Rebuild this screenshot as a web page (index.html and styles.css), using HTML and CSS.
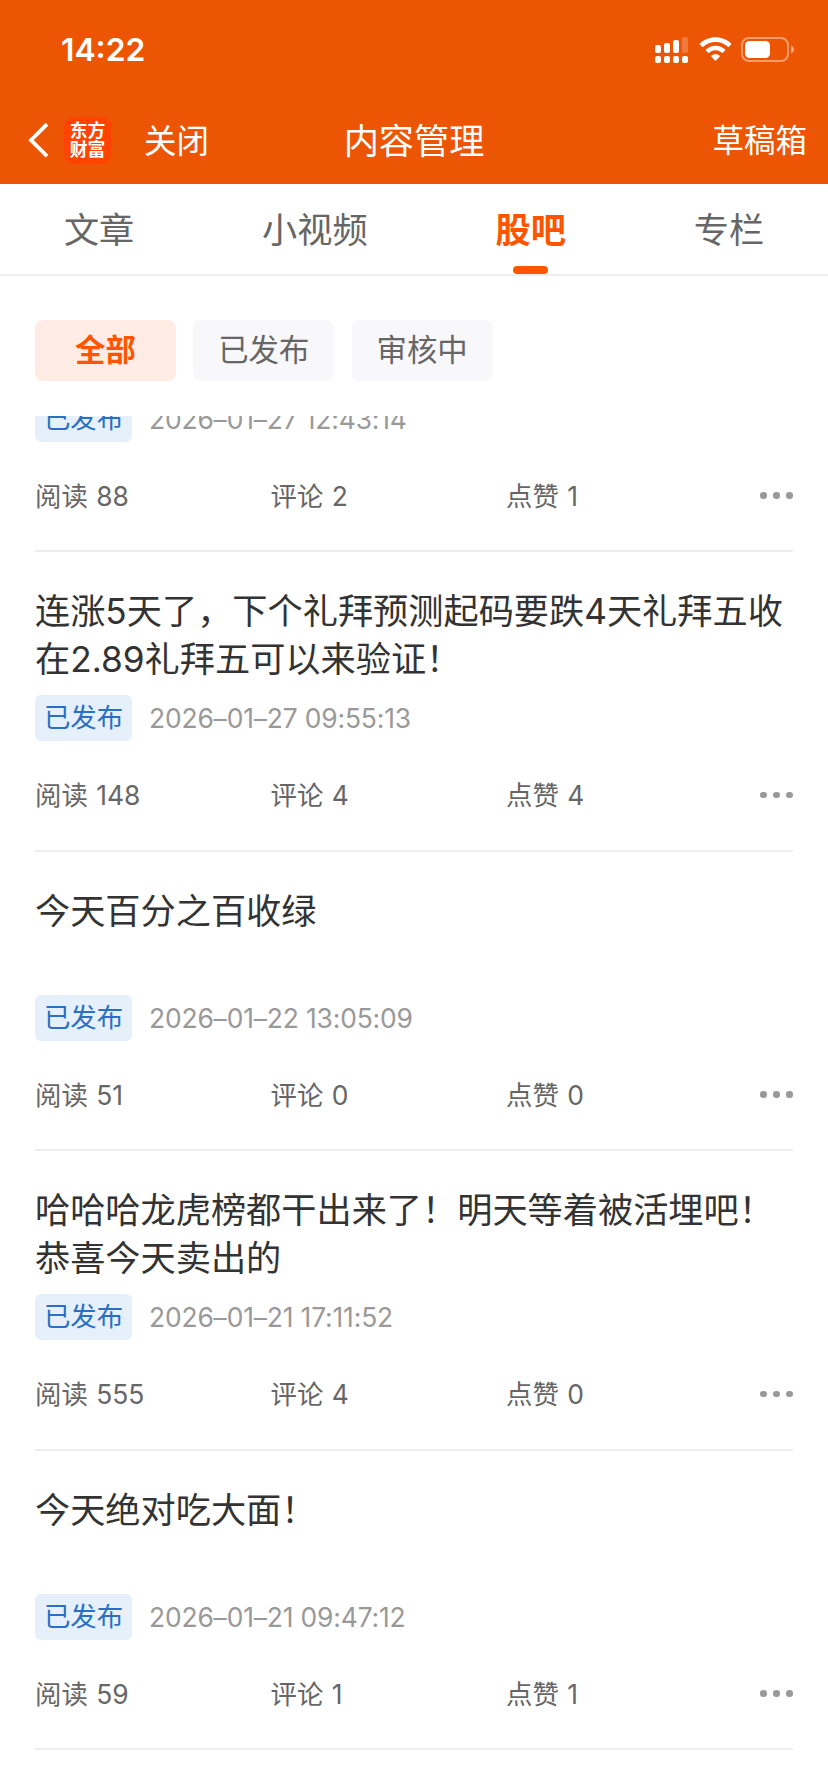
FILE: index.html
```html
<!DOCTYPE html>
<html lang="zh-CN">
<head>
<meta charset="utf-8">
<title>内容管理</title>
<link rel="stylesheet" href="styles.css">
</head>
<body>
<div class="app">
  <header class="header">
    <div class="status">
      <span class="clock">14:22</span>
      <svg class="status-icons" width="170" height="50" viewBox="0 0 170 50" fill="#fff">
        <rect x="15" y="20" width="6" height="8" rx="2"/>
        <rect x="24" y="18" width="6" height="10" rx="2"/>
        <rect x="33" y="15" width="6" height="13" rx="2"/>
        <rect x="42" y="12" width="6" height="16" rx="2" opacity=".22"/>
        <rect x="15" y="31" width="6" height="7" rx="2"/>
        <rect x="24" y="31" width="6" height="7" rx="2"/>
        <rect x="33" y="31" width="6" height="7" rx="2"/>
        <rect x="42" y="31" width="6" height="7" rx="2"/>
        <path d="M75.5 12.2c6 0 11.500 2.300 15.600 6.200.3.300.3.800 0 1.100l-2.200 2.200c-.3.300-.8.300-1.100 0A17.800 17.800 0 0 0 75.500 17c-4.700 0-9 1.800-12.300 4.700-.3.300-.8.300-1.100 0l-2.200-2.200a.8.800 0 0 1 0-1.100c4.100-3.900 9.600-6.200 15.600-6.200z"/>
        <path d="M75.500 20.700c3.700 0 7 1.400 9.600 3.700.3.300.3.800 0 1.100l-2.300 2.200c-.3.300-.7.300-1 0a9.500 9.500 0 0 0-12.600 0c-.3.300-.7.300-1 0l-2.300-2.200a.8.800 0 0 1 0-1.100c2.600-2.300 5.900-3.700 9.600-3.700z"/>
        <path d="M75.500 29.200c1.500 0 2.900.5 4 1.400.4.300.4.800.1 1.100L76 35.400c-.3.300-.7.300-1 0l-3.600-3.700c-.3-.3-.3-.8.1-1.100 1.100-.9 2.500-1.400 4-1.400z"/>
        <rect x="102" y="13" width="46" height="23" rx="7" fill="none" stroke="#fff" stroke-width="2" opacity=".42"/>
        <rect x="105" y="16" width="25" height="17" rx="4.500"/>
        <path d="M151 20.500c2 .6 3 2.200 3 4s-1 3.400-3 4z" opacity=".5"/>
      </svg>
    </div>
    <nav class="nav">
      <div class="nav-left">
        <svg class="back" width="20" height="36" viewBox="0 0 20 36" fill="none" stroke="#fff" stroke-width="3.800"><path d="M19 2.200 3 18.200l16 16"/></svg>
        <div class="logo"><span>东方</span><span>财富</span></div>
        <span class="close">关闭</span>
      </div>
      <h1 class="title">内容管理</h1>
      <span class="drafts">草稿箱</span>
    </nav>
  </header>

  <div class="tabs">
    <span class="tab">文章</span>
    <span class="tab">小视频</span>
    <span class="tab tab-active">股吧</span>
    <span class="tab">专栏</span>
  </div>

  <div class="filters">
    <span class="filter filter-active">全部</span>
    <span class="filter">已发布</span>
    <span class="filter">审核中</span>
  </div>

  <main class="list">
    <article class="post post-scrolled">
      <h2 class="post-title"></h2>
      <div class="meta"><span class="tag">已发布</span><time>2026–01–27 12:43:14</time></div>
      <div class="stats"><span>阅读 88</span><span>评论 2</span><span>点赞 1</span><span class="more"><i></i><i></i><i></i></span></div>
    </article>
    <article class="post">
      <h2 class="post-title">连涨5天了，下个礼拜预测起码要跌4天礼拜五收<br>在2.89礼拜五可以来验证！</h2>
      <div class="meta"><span class="tag">已发布</span><time>2026–01–27 09:55:13</time></div>
      <div class="stats"><span>阅读 148</span><span>评论 4</span><span>点赞 4</span><span class="more"><i></i><i></i><i></i></span></div>
    </article>
    <article class="post">
      <h2 class="post-title">今天百分之百收绿</h2>
      <div class="meta"><span class="tag">已发布</span><time>2026–01–22 13:05:09</time></div>
      <div class="stats"><span>阅读 51</span><span>评论 0</span><span>点赞 0</span><span class="more"><i></i><i></i><i></i></span></div>
    </article>
    <article class="post">
      <h2 class="post-title">哈哈哈龙虎榜都干出来了！明天等着被活埋吧！<br>恭喜今天卖出的</h2>
      <div class="meta"><span class="tag">已发布</span><time>2026–01–21 17:11:52</time></div>
      <div class="stats"><span>阅读 555</span><span>评论 4</span><span>点赞 0</span><span class="more"><i></i><i></i><i></i></span></div>
    </article>
    <article class="post">
      <h2 class="post-title">今天绝对吃大面！</h2>
      <div class="meta"><span class="tag">已发布</span><time>2026–01–21 09:47:12</time></div>
      <div class="stats"><span>阅读 59</span><span>评论 1</span><span>点赞 1</span><span class="more"><i></i><i></i><i></i></span></div>
    </article>
  </main>
</div>
</body>
</html>
```
FILE: styles.css
```css
* { box-sizing: border-box; }

body {
  margin: 0;
  background: #fff;
  color: #666;
  font-family: Inter, "Noto Sans CJK SC", sans-serif;
}

.app {
  display: flex;
  flex-direction: column;
  width: 828px;
  height: 1792px;
  overflow: hidden;
}

.header {
  flex: none;
  height: 184px;
  background: #eb5503;
  color: #fff;
}

.status {
  display: flex;
  justify-content: space-between;
  align-items: center;
  height: 100px;
  padding: 0 18px 0 61px;
}

.clock {
  font-size: 31.800px;
  font-weight: 600;
  line-height: 40px;
}

.nav {
  display: grid;
  grid-template-columns: 1fr auto 1fr;
  align-items: center;
  height: 80px;
  padding: 0 21px 0 28px;
  white-space: nowrap;
}

.nav-left {
  display: flex;
  align-items: center;
}

.logo {
  display: flex;
  flex-direction: column;
  align-items: center;
  justify-content: center;
  width: 47px;
  height: 47px;
  margin: 0 33px 0 16px;
  border-radius: 9px;
  background: #ff4400;
  font-size: 17.800px;
  font-weight: 700;
  line-height: 19.500px;
}

.close {
  padding-bottom: 4px;
  font-size: 32.500px;
}

.title {
  margin: 0 7px 0 0;
  padding-bottom: 4px;
  font-size: 35.200px;
  font-weight: 400;
}

.drafts {
  justify-self: end;
  padding-bottom: 4px;
  font-size: 31.500px;
}

.tabs {
  display: flex;
  flex: none;
  justify-content: space-around;
  height: 92px;
  border-bottom: 2px solid #eee;
  font-size: 35.200px;
  line-height: 92px;
}

.tab { height: 90px; }

.tab-active {
  position: relative;
  color: #ff5500;
  font-weight: 700;
}

.tab-active::after {
  content: "";
  position: absolute;
  bottom: 0;
  left: 50%;
  width: 35px;
  height: 8px;
  margin-left: -17.500px;
  border-radius: 4px;
  background: #ff5500;
}

.filters {
  display: flex;
  flex: none;
  gap: 17.600px;
  height: 140px;
  padding: 44px 35px 35px;
}

.filter {
  width: 140.800px;
  height: 61px;
  border-radius: 8px;
  background: #f8f8fb;
  font-size: 30.400px;
  line-height: 60px;
  text-align: center;
}

.filter-active {
  background: #ffece4;
  color: #ff5500;
  font-weight: 700;
}

.list {
  flex: 1;
  min-height: 0;
  padding: 0 35px;
  overflow: hidden;
}

.post {
  height: 299.500px;
  padding-top: 35px;
  border-bottom: 2px solid #eee;
}

.post-scrolled { margin-top: -163.500px; }

.post-title {
  height: 96px;
  margin: 0 0 12px;
  color: #333;
  font-size: 35.200px;
  font-weight: 400;
  line-height: 48px;
  white-space: nowrap;
}

.meta {
  display: flex;
  align-items: center;
  gap: 17px;
  height: 46px;
  color: #999;
  font-size: 26.400px;
  letter-spacing: -.15px;
}

.tag {
  width: 97px;
  height: 46px;
  border-radius: 6px;
  background: #e6f0fb;
  color: #2a6fc4;
  font-size: 26.400px;
  letter-spacing: 0;
  line-height: 45px;
  text-align: center;
}

.stats {
  display: grid;
  grid-template-columns: 235.500px 235.500px 1fr auto;
  align-items: center;
  height: 36px;
  margin-top: 36px;
  font-size: 26.400px;
  line-height: 36px;
  word-spacing: 1px;
}

.more {
  display: flex;
  gap: 6.600px;
}

.more i {
  width: 6.600px;
  height: 6.600px;
  border-radius: 50%;
  background: #999;
}
```
